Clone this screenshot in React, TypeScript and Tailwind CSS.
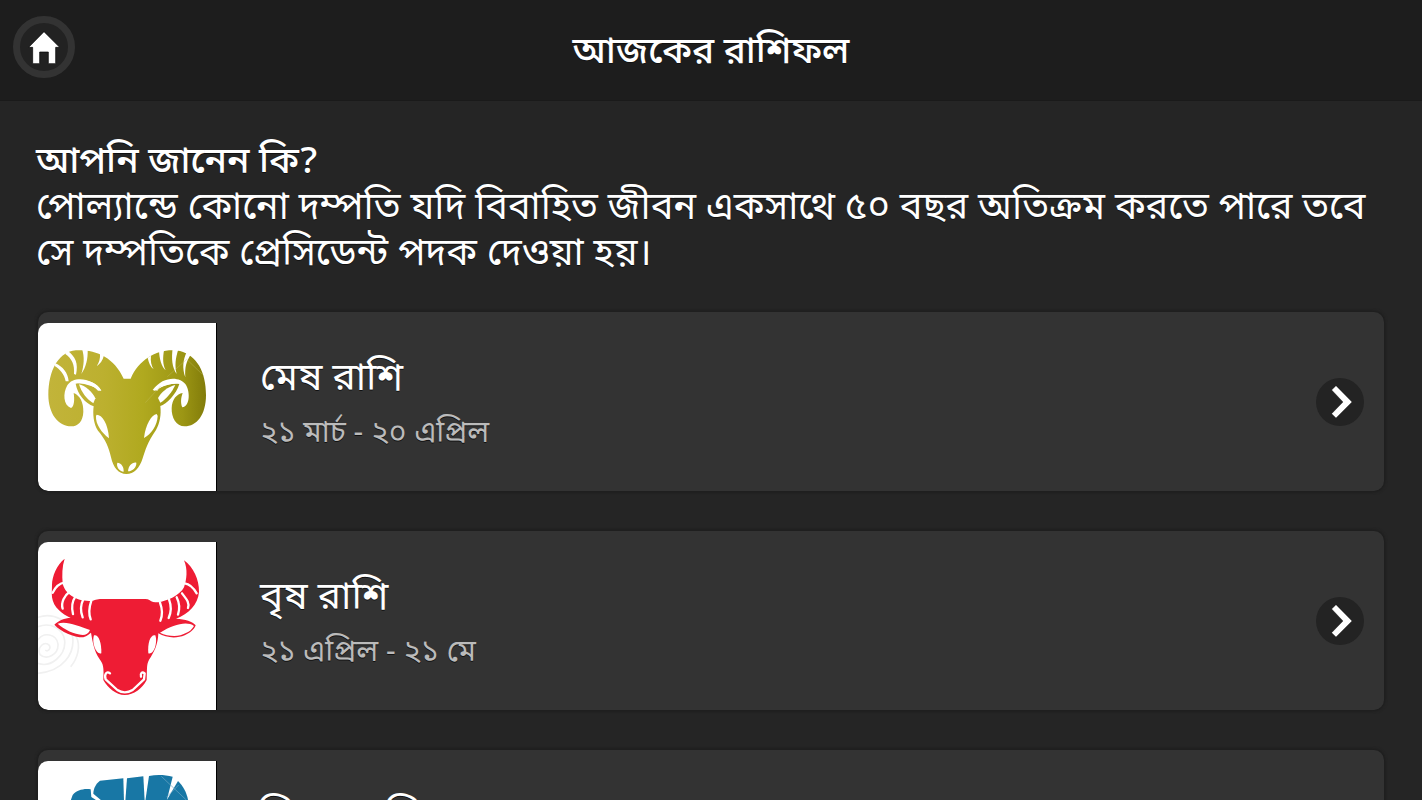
import React from 'react'

interface Sign {
  id: string
  name: string
  dates: string
  art: React.ReactNode
}

const RamArt = () => (
  <svg viewBox="24 39 534 504" className="block w-full h-full" aria-hidden="true">
    <defs>
      <linearGradient id="ram-gold" x1="0" x2="1" y1="0" y2="0">
        <stop offset="0" stopColor="#c2b43a" />
        <stop offset="0.35" stopColor="#bcb02f" />
        <stop offset="0.6" stopColor="#b0a91f" />
        <stop offset="0.85" stopColor="#9c9614" />
        <stop offset="1" stopColor="#827c0a" />
      </linearGradient>
    </defs>
    <path
      fill="url(#ram-gold)"
      d="M128 122C190 116 250 138 281 206L302 206C330 140 395 112 450 123C500 136 528 185 528 255C528 315 500 349 464 349C438 349 424 322 425 294C426 268 440 252 458 249C453 262 451 279 457 292C482 288 480 240 466 222C450 200 400 196 368 240L382 242C388 232 414 218 448 222C438 254 410 282 391 288C394 315 390 338 378 360C352 398 346 420 338 445C328 476 312 492 289 492C266 492 250 474 243 442C237 412 225 386 204 362C190 342 188 310 191 289C166 280 142 252 137 221C165 216 192 228 204 242L214 242C190 204 130 196 112 226C98 250 100 286 123 294C133 290 134 268 131 249C150 256 161 278 160 305C159 334 144 349 124 349C84 349 55 310 55 254C56 180 84 132 128 122Z"
    />
    <g fill="#fff">
      <path d="M76 160C98 170 114 188 116 214L107 214C103 192 90 178 74 168Z" />
      <path d="M112 122C136 138 146 160 138 194L132 192C134 164 126 146 106 132Z" />
      <path d="M156 116L173 118C174 148 168 172 154 192C162 164 164 142 156 116Z" />
      <path d="M210 130L222 136C218 152 210 162 200 169C208 156 211 146 210 130Z" />
      <path d="M353 143L363 137C361 154 364 166 371 178C361 170 356 158 353 143Z" />
      <path d="M387 122L403 116C397 146 399 164 407 181C394 168 388 146 387 122Z" />
      <path d="M428 114L445 118C436 146 434 168 440 192C426 172 424 146 428 114Z" />
      <path d="M470 126L482 134C469 154 464 172 466 202C456 174 459 150 470 126Z" />
      <path d="M147 223C165 226 187 246 196 265L190 280C170 268 154 246 147 223Z" />
      <path d="M436 225C414 230 393 247 384 264L391 278C410 267 426 246 436 225Z" />
      <path d="M134 212C165 208 200 214 214 242C198 234 166 218 134 219Z" />
      <path d="M452 212C416 210 382 220 370 244C390 230 420 219 452 219Z" />
      <path d="M200 314C216 314 234 340 237 385C216 370 196 342 198 318Z" />
      <path d="M380 312C364 314 346 346 342 384C364 372 382 346 383 318Z" />
      <path d="M262 458C273 458 282 470 281 485C268 484 258 470 262 458Z" />
      <path d="M319 458C306 456 295 468 294 484C308 483 320 472 319 458Z" />
    </g>
    <path stroke="#c9c46a" strokeWidth="2" opacity="0.5" fill="none" d="M346 278L392 228M412 200L470 148M470 148L518 194" />
  </svg>
)

const BullArt = () => (
  <svg viewBox="24 36 534 504" className="block w-full h-full" aria-hidden="true">
    <g fill="none" stroke="#f0f0f0" strokeWidth="5">
      <path d="M24 262C70 246 122 272 128 322C134 370 100 424 24 430" />
      <path d="M24 290C60 276 100 294 104 332C108 378 60 414 24 400" />
      <path d="M24 330C40 304 80 312 84 342C86 374 50 392 30 374C20 350 44 332 58 346C64 358 52 366 46 360" />
      <path d="M138 318C154 350 142 386 122 410" />
    </g>
    <path
      fill="#ee1c34"
      d="M104 86C80 104 66 140 66 164C66 176 65 190 66 202C70 232 96 252 122 264C104 264 86 272 73 284C94 306 130 322 160 322C172 318 178 312 183 308C188 336 192 362 208 386C220 402 222 410 220 450C234 474 258 495 284 495C312 495 336 476 350 450C352 410 348 402 362 382C378 356 384 336 385 310C408 324 440 326 464 316C480 308 492 300 497 286C488 274 466 268 438 266C476 252 504 224 507 186C508 150 490 110 462 91C474 118 470 150 462 172C450 196 410 214 384 217C372 217 366 216 358 210Q354 207 346 207H210C196 208 192 213 180 213C140 214 104 192 98 160C96 136 96 110 104 86Z"
    />
    <g fill="none" stroke="#fff" strokeWidth="7" strokeLinecap="round">
      <path d="M68 188C76 172 86 160 104 158" />
      <path d="M98 236C92 218 104 196 118 186" />
      <path d="M129 252C124 232 128 212 136 200" />
      <path d="M158 262C150 242 152 224 160 208" />
      <path d="M182 268C174 248 178 230 184 212" />
      <path d="M391 272C399 254 396 234 390 218" />
      <path d="M416 264C424 246 424 226 417 208" />
      <path d="M444 254C450 236 448 218 440 202" />
      <path d="M474 234C480 216 466 204 456 190" />
      <path d="M500 190C492 176 480 162 464 160" />
    </g>
    <g fill="#fff">
      <path d="M83 281C110 272 144 288 180 300C176 310 168 315 158 315C132 312 104 300 83 281Z" />
      <path d="M492 288C470 272 430 284 390 308C414 320 448 321 466 310C478 306 486 298 492 288Z" />
      <path d="M192 316C204 312 215 334 214 370C200 376 184 340 192 316Z" />
      <path d="M376 316C362 312 352 338 355 370C370 376 384 340 376 316Z" />
    </g>
    <path
      fill="none"
      stroke="#fff"
      strokeWidth="7"
      strokeLinecap="round"
      strokeLinejoin="round"
      d="M240 430C230 422 222 432 227 448L262 480Q284 494 308 480L342 448L344 430C336 424 330 430 333 440"
    />
  </svg>
)

const TwinsArt = () => (
  <svg viewBox="24 62 534 504" className="block w-full h-full" aria-hidden="true">
    <g fill="#1877a5">
      <path d="M210 121L280 114L282 182H216L190 160C190 144 198 130 210 121Z" />
      <path d="M291 114L340 108L344 182H286Z" />
      <path d="M357 107C382 102 406 104 428 109L410 182H346Z" />
      <path d="M444 122C462 140 472 160 476 190H404Z" />
      <path d="M182 147C160 144 140 150 128 164L118 192H218L184 170Z" />
      <path d="M118 184H476C490 260 460 330 420 370V520H160V370C120 320 104 250 118 184Z" />
    </g>
    <path fill="none" stroke="#6fa9c5" strokeWidth="2" d="M394 108L470 180M410 170L446 134" />
  </svg>
)

const signs: Sign[] = [
  { id: 'mesh', name: 'মেষ রাশি', dates: '২১ মার্চ - ২০ এপ্রিল', art: <RamArt /> },
  { id: 'brish', name: 'বৃষ রাশি', dates: '২১ এপ্রিল - ২১ মে', art: <BullArt /> },
  { id: 'mithun', name: 'মিথুন রাশি', dates: '২২ মে - ২১ জুন', art: <TwinsArt /> }
]

const Header = () => (
  <header className="grid grid-cols-[62px_1fr_62px] items-center h-[101px] px-[13px] pb-1.5 bg-[#1d1d1d] border-b border-[#1a1a1a]">
    <a
      href="#home"
      aria-label="Home"
      className="w-[62px] h-[62px] rounded-full border-[7px] border-[#333] bg-[#222] flex items-center justify-center"
    >
      <svg viewBox="85 90 96 99" className="w-8 h-[33px] shrink-0" aria-hidden="true">
        <path
          d="M133 92L180 139H168V188H146V153H120V188H99V139H87Z"
          fill="#fff"
          stroke="#000"
          strokeWidth="2"
        />
      </svg>
    </a>
    <h1 className="pt-3.5 text-center text-[37px] leading-[48px] font-medium">আজকের রাশিফল</h1>
  </header>
)

const SignRow = ({ sign }: { sign: Sign }) => (
  <li>
    <a
      href={`#${sign.id}`}
      className="flex items-end pr-5 rounded-[10px] bg-[#333] shadow-[0_0_3px_1px_#1c1c1c] overflow-hidden"
    >
      <div className="w-[179px] h-[168px] mt-[11px] shrink-0 rounded-l-[10px] bg-white overflow-hidden border-r border-black">
        {sign.art}
      </div>
      <div className="flex-1 self-center pt-2 pl-[43px]">
        <h2 className="text-[39px] leading-[56px]">{sign.name}</h2>
        <p className="text-[30px] leading-[52px] text-[#bbb]">{sign.dates}</p>
      </div>
      <span className="w-12 h-12 self-center rounded-full bg-[#232323] flex items-center justify-center">
        <svg viewBox="124 254 66 102" className="w-[22px] h-[34px] ml-1" aria-hidden="true">
          <path d="M139 256L187 305L139 353L126 340L160 305L126 269Z" fill="#fff" stroke="#111" strokeWidth="1" />
        </svg>
      </span>
    </a>
  </li>
)

export default function App() {
  return (
    <div className="h-screen overflow-hidden bg-[#252525] text-white font-['Noto_Sans_Bengali','Noto_Sans',sans-serif] [text-shadow:0_1px_0_#111]">
      <Header />
      <main className="px-9 pt-10">
        <section className="leading-[46px]">
          <h2 className="text-[37px] font-medium">আপনি জানেন কি?</h2>
          <p className="text-[38px]">
            পোল্যান্ডে কোনো দম্পতি যদি বিবাহিত জীবন একসাথে ৫০ বছর অতিক্রম করতে পারে তবে সে দম্পতিকে প্রেসিডেন্ট পদক দেওয়া হয়।
          </p>
        </section>
        <ul className="flex flex-col gap-10 px-0.5 pt-[33px]">
          {signs.map(sign => (
            <SignRow key={sign.id} sign={sign} />
          ))}
        </ul>
      </main>
    </div>
  )
}
